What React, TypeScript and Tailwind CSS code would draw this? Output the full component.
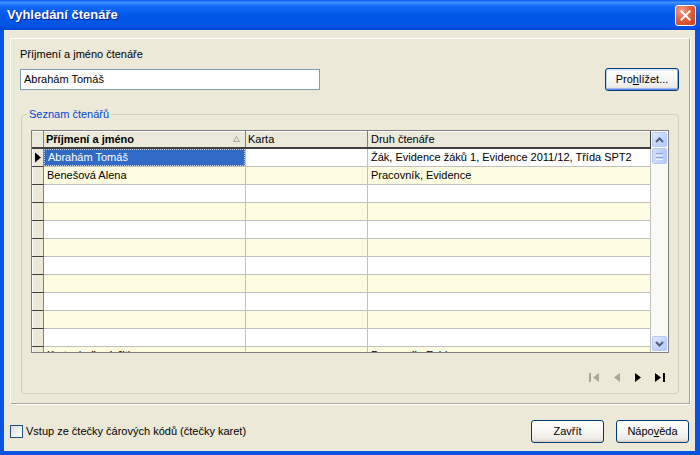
import { ReactNode } from "react";

interface Reader {
  name: string;
  card: string;
  kind: string;
}

const readers: Reader[] = [
  { name: "Abrahám Tomáš", card: "", kind: "Žák, Evidence žáků 1, Evidence 2011/12, Třída SPT2" },
  { name: "Benešová Alena", card: "", kind: "Pracovník, Evidence" },
  ...Array.from({ length: 9 }, () => ({ name: "", card: "", kind: "" })),
  { name: "Kratochvílová Jitka", card: "", kind: "Pracovník, Evidence" },
];

function XpButton({ children, className = "", isDefault = false }: { children: ReactNode; className?: string; isDefault?: boolean }) {
  return (
    <button
      className={`h-[23px] rounded-[3px] border border-[#003C74] bg-[linear-gradient(to_bottom,#FFFFFF_0%,#F7F7F4_45%,#ECEBE6_85%,#D6D0C5_100%)] text-[11px] leading-[13px] text-black ${
        isDefault
          ? "shadow-[inset_0_1px_0_#CEE7FF,inset_1px_0_0_#BCD4F6,inset_-1px_0_0_#89ADE4,inset_0_-1px_0_#6982EE,inset_0_2px_0_#E5F0FF,inset_0_-2px_0_#9CB6F0]"
          : ""
      } ${className}`}
    >
      {children}
    </button>
  );
}

function ScrollBtn({ up }: { up: boolean }) {
  return (
    <div className="m-[1px] flex h-[15px] w-[15px] items-center justify-center rounded-[2px] border border-[#B6C9F4] bg-[linear-gradient(135deg,#E3EBFE_0%,#C6D6FC_50%,#B4C9F6_100%)]">
      <svg width="9" height="6" viewBox="0 0 9 6">
        <path d={up ? "M1 5 L4.5 1.5 L8 5" : "M1 1 L4.5 4.5 L8 1"} fill="none" stroke="#4D6185" strokeWidth="2" />
      </svg>
    </div>
  );
}

export default function App() {
  return (
    <div className="flex h-[455px] w-[700px] flex-col bg-[#0853E2] font-['Liberation_Sans',Arial,sans-serif] text-[11px] text-black">
      {/* Title bar */}
      <div className="flex h-[30px] items-center justify-between bg-[linear-gradient(to_bottom,#0A5CEC_0%,#3B8FFF_8%,#1168F5_22%,#0058E8_50%,#0054E3_85%,#0046D4_100%)] pl-[7px] pr-[4px]">
        <span className="text-[13px] font-bold leading-[16px] text-white [text-shadow:1px_1px_0_#0A1E8A]">Vyhledání čtenáře</span>
        <div className="flex h-[21px] w-[21px] items-center justify-center rounded-[3px] border border-white bg-[radial-gradient(circle_at_30%_25%,#F0A38C_0%,#E2603F_45%,#C8411F_100%)]">
          <svg width="11" height="11" viewBox="0 0 11 11">
            <path d="M1.5 1.5 L9.5 9.5 M9.5 1.5 L1.5 9.5" stroke="white" strokeWidth="2" strokeLinecap="square" />
          </svg>
        </div>
      </div>

      {/* Body */}
      <div className="ml-[4px] mr-[5px] flex flex-col bg-[#ECE9D8] pl-[6px] pr-[5px] pt-[8px] pb-[8px]">
        <div className="flex flex-col border border-b-[#ACA899] border-l-[#FFFFFF] border-r-[#ACA899] border-t-[#FFFFFF] shadow-[1px_1px_0_#FFFFFF]">
          <div className="ml-[9px] mt-[9px] h-[13px] leading-[13px]">Příjmení a jméno čtenáře</div>
          <div className="ml-[9px] mr-[10px] mt-[7px] flex h-[23px] items-center justify-between">
            <div className="flex h-[21px] w-[300px] items-center border border-[#7F9DB9] bg-white pl-[3px] leading-[13px]">Abrahám Tomáš</div>
            <XpButton isDefault className="w-[74px]">
              Pro<span className="underline">h</span>lížet...
            </XpButton>
          </div>

          <fieldset className="mx-[10px] mb-[9px] mt-[17px] rounded-[4px] border border-[#D0D0BF]">
            <legend className="ml-[5px] px-[2px] leading-[13px] text-[#0046D5]">Seznam čtenářů</legend>
            <div className="mx-[9px] mt-[9px] flex flex-col">
              {/* Grid */}
              <div className="flex h-[223px] border border-[#7F7F7F] bg-white">
                <div className="flex flex-1 flex-col overflow-hidden">
                  <div className="flex h-[18px] shrink-0 border-b-2 border-[#404040] bg-[#EBE9DA] shadow-[inset_0_1px_0_#FFFFFF]">
                    <div className="w-[12px] border-r border-[#808080]" />
                    <div className="flex w-[202px] items-center justify-between border-r border-[#808080] pl-[2px] pr-[5px] font-bold">
                      <span>Příjmení a jméno</span>
                      <svg width="7" height="6" viewBox="0 0 7 6">
                        <path d="M0.5 5.5 L3.5 0.5 L6.5 5.5 Z" fill="none" stroke="#ACA899" strokeWidth="1" />
                      </svg>
                    </div>
                    <div className="flex w-[122px] items-center border-r border-[#808080] pl-[2px]">Karta</div>
                    <div className="flex flex-1 items-center border-r border-[#404040] pl-[3px]">Druh čtenáře</div>
                  </div>
                  {readers.map((r, i) => {
                    const bg = i % 2 === 0 ? "bg-white" : "bg-[#FFFDE1]";
                    const selected = i === 0;
                    return (
                      <div key={i} className="flex h-[18px] shrink-0">
                        <div className="flex w-[12px] items-center border-b border-r border-b-[#404040] border-r-[#808080] bg-[#ECE9D8] shadow-[inset_1px_0_0_#FFFFFF]">
                          {selected && (
                            <svg width="8" height="11" viewBox="0 0 8 11" className="ml-[2px]">
                              <path d="M1 0.5 L7 5.5 L1 10.5 Z" fill="#000000" />
                            </svg>
                          )}
                        </div>
                        <div className={`w-[202px] border-b border-r border-[#C0C0C0] ${selected ? "bg-[#316AC5] text-white" : bg}`}>
                          <div className={`flex h-full items-center whitespace-nowrap pl-[3px] ${selected ? "border border-dotted border-[#C9D5EC] pl-[2px]" : ""}`}>{r.name}</div>
                        </div>
                        <div className={`flex w-[122px] items-center border-b border-r border-[#C0C0C0] pl-[3px] ${bg}`}>{r.card}</div>
                        <div className={`flex flex-1 items-center whitespace-nowrap border-b border-r border-[#C0C0C0] pl-[3px] ${bg}`}>{r.kind}</div>
                      </div>
                    );
                  })}
                </div>
                {/* Scrollbar */}
                <div className="flex w-[17px] flex-col bg-[#F9F9F5]">
                  <ScrollBtn up />
                  <div className="mx-[1px] flex h-[16px] w-[15px] items-center justify-center rounded-[2px] border border-[#B6C9F4] bg-[linear-gradient(to_right,#D2DEFC_0%,#C3D4FC_50%,#B6CAF6_100%)]">
                    <div className="flex flex-col gap-[1px]">
                      <div className="h-[1px] w-[7px] bg-[#8EA7E6]" />
                      <div className="h-[1px] w-[7px] bg-[#EEF3FF]" />
                      <div className="h-[1px] w-[7px] bg-[#8EA7E6]" />
                      <div className="h-[1px] w-[7px] bg-[#EEF3FF]" />
                    </div>
                  </div>
                  <div className="flex-1" />
                  <ScrollBtn up={false} />
                </div>
              </div>

              {/* Navigator */}
              <div className="-mr-[2px] mb-[5px] mt-[13px] flex h-[22px] justify-end">
                <div className="flex w-[22px] items-center justify-center">
                  <svg width="11" height="9" viewBox="0 0 11 9">
                    <rect x="0" y="0" width="2" height="9" fill="#ACA899" />
                    <path d="M10 0 L4 4.5 L10 9 Z" fill="#ACA899" />
                  </svg>
                </div>
                <div className="flex w-[22px] items-center justify-center">
                  <svg width="7" height="9" viewBox="0 0 7 9">
                    <path d="M7 0 L1 4.5 L7 9 Z" fill="#ACA899" />
                  </svg>
                </div>
                <div className="flex w-[22px] items-center justify-center">
                  <svg width="7" height="9" viewBox="0 0 7 9">
                    <path d="M0 0 L6 4.5 L0 9 Z" fill="#000000" />
                  </svg>
                </div>
                <div className="flex w-[22px] items-center justify-center">
                  <svg width="11" height="9" viewBox="0 0 11 9">
                    <path d="M0 0 L6 4.5 L0 9 Z" fill="#000000" />
                    <rect x="8" y="0" width="2" height="9" fill="#000000" />
                  </svg>
                </div>
              </div>
            </div>
          </fieldset>
        </div>

        {/* Bottom row */}
        <div className="mr-[1px] mt-[16px] flex h-[23px] items-center justify-between">
          <label className="flex items-center gap-[3px] leading-[13px]">
            <span className="h-[13px] w-[13px] border border-[#1C5180] bg-[linear-gradient(135deg,#DCDCD7_0%,#F2F2EE_60%,#FFFFFF_100%)]" />
            <span>Vstup ze čtečky čárových kódů (čtečky karet)</span>
          </label>
          <div className="flex gap-[12px]">
            <XpButton className="w-[73px]">Zavřít</XpButton>
            <XpButton className="w-[73px]">
              Nápo<span className="underline">v</span>ěda
            </XpButton>
          </div>
        </div>
      </div>
    </div>
  );
}
